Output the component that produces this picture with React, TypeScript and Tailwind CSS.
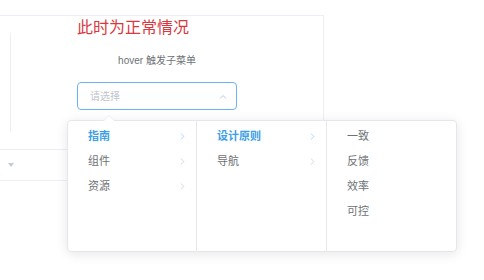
import { ChevronRight } from 'lucide-react';

const font = { fontFamily: '"Liberation Sans", "Noto Sans CJK SC", sans-serif' };

interface Item {
  label: string;
  active?: boolean;
  more?: boolean;
}

const columns: Item[][] = [
  [
    { label: '指南', active: true, more: true },
    { label: '组件', more: true },
    { label: '资源', more: true },
  ],
  [
    { label: '设计原则', active: true, more: true },
    { label: '导航', more: true },
  ],
  [{ label: '一致' }, { label: '反馈' }, { label: '效率' }, { label: '可控' }],
];

function MenuColumn({ items, last, width }: { items: Item[]; last?: boolean; width: string }) {
  return (
    <ul className={`${width} h-full pt-[3px] ${last ? '' : 'border-r border-[#e4e7ed]'}`}>
      {items.map(item => (
        <li
          key={item.label}
          className={`flex h-[25px] items-center justify-between pl-[20px] pr-[8px] text-[11px] ${
            item.active ? 'font-bold text-[#3d9fe6]' : 'text-[#6e7175]'
          }`}
        >
          <span>{item.label}</span>
          {item.more && (
            <ChevronRight
              className={`h-[11px] w-[11px] ${item.active ? 'text-[#8cc5ff]' : 'text-[#c0c4cc]'}`}
              strokeWidth={1.5}
            />
          )}
        </li>
      ))}
    </ul>
  );
}

export default function App() {
  return (
    <div className="relative h-[280px] w-[484px] overflow-hidden bg-white" style={font}>
      {/* demo card */}
      <div className="ml-[-1px] mt-[15px] w-[325px] border-r border-t border-b border-[#ebeef5]">
        <div className="flex h-[134px] border-b border-[#ebeef5]">
          <div className="my-[17px] w-[12px] border-r border-[#ebeef5]" />
          <div className="ml-[66px] w-[160px]">
            <h3 className="mt-[1px] h-[22px] text-[16px] leading-[22px] text-[#d9383f]">此时为正常情况</h3>
            <p className="mt-[15px] h-[14px] text-center text-[10px] leading-[14px] text-[#6e7175]">hover 触发子菜单</p>
            <div className="mt-[14px] flex h-[28px] items-center justify-between rounded-[4px] border border-[#6cb4f0] pl-[12px] pr-[9px]">
              <span className="text-[10px] text-[#c0c4cc]">请选择</span>
              <svg width="8" height="5" viewBox="0 0 8 5" fill="none" stroke="#c0c4cc" strokeWidth="1">
                <path d="M1 4.5 L4 1.5 L7 4.5" />
              </svg>
            </div>
          </div>
        </div>
        <div className="flex h-[30px] items-center pl-[9px]">
          <svg width="6" height="4" viewBox="0 0 6 4" fill="#c0ccda">
            <path d="M0 0 L6 0 L3 4 Z" />
          </svg>
        </div>
      </div>

      {/* cascader dropdown */}
      <div className="absolute left-[67px] top-[120px] h-[132px] w-[390px] rounded-[4px] border border-[#e4e7ed] bg-white shadow-[0_2px_12px_rgba(0,0,0,0.1)]">
        <div className="absolute left-[35px] top-[-6px] h-0 w-0 border-x-[6px] border-b-[6px] border-x-transparent border-b-[#ebeef5]" />
        <div className="absolute left-[35px] top-[-5px] h-0 w-0 border-x-[6px] border-b-[6px] border-x-transparent border-b-white" />
        <div className="flex h-full">
          <MenuColumn items={columns[0]} width="w-[129px]" />
          <MenuColumn items={columns[1]} width="w-[130px]" />
          <MenuColumn items={columns[2]} width="flex-1" last />
        </div>
      </div>
    </div>
  );
}
